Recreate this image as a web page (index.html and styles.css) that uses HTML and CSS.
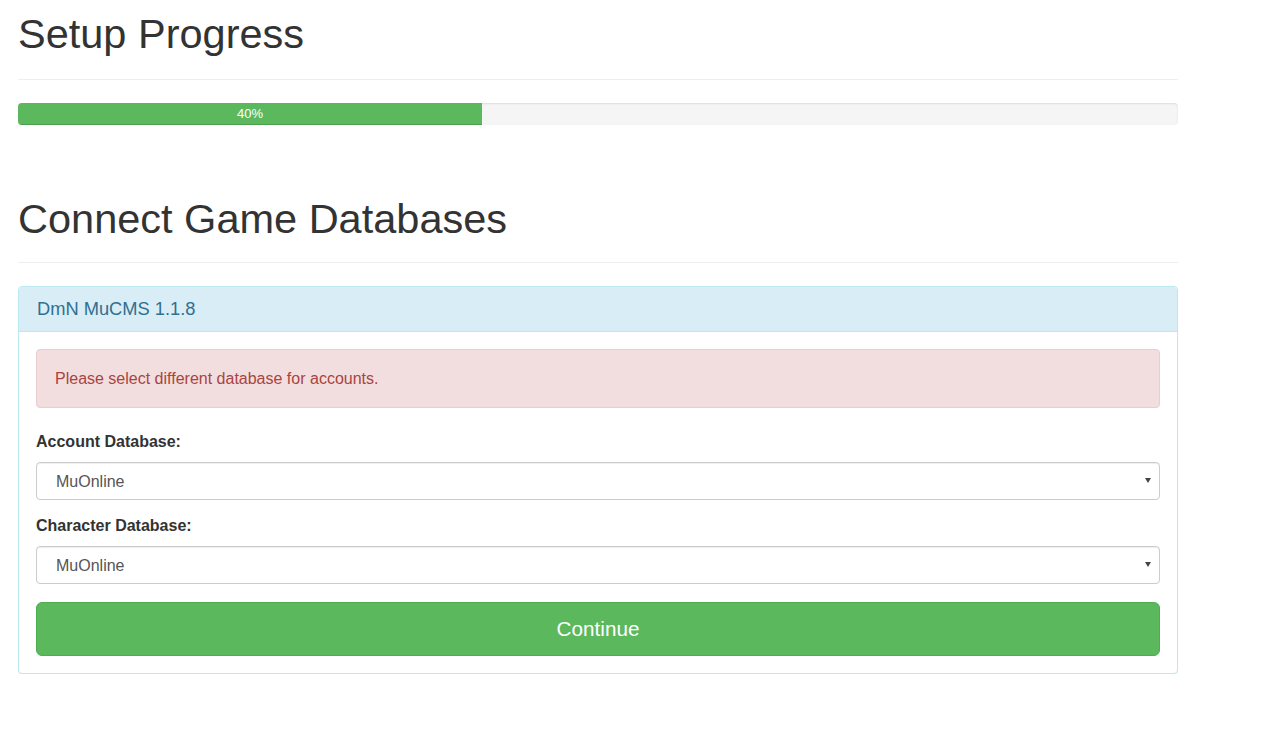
FILE: index.html
```html
<!DOCTYPE html>
<html lang="en">
<head>
<meta charset="utf-8">
<title>Setup Progress</title>
<link rel="stylesheet" href="styles.css">
</head>
<body>
<div class="container">
  <div class="page-header first">
    <h1>Setup Progress</h1>
  </div>
  <div class="progress">
    <div class="progress-bar" style="width: 40%">40%</div>
  </div>

  <div class="page-header second">
    <h1>Connect Game Databases</h1>
  </div>

  <div class="panel">
    <div class="panel-heading">DmN MuCMS 1.1.8</div>
    <div class="panel-body">
      <div class="alert">Please select different database for accounts.</div>
      <form class="form">
        <div class="form-group">
          <label class="label" for="acc">Account Database:</label>
          <div class="select-wrap">
            <select id="acc" class="form-control"><option>MuOnline</option></select>
            <span class="caret"></span>
          </div>
        </div>
        <div class="form-group">
          <label class="label" for="chr">Character Database:</label>
          <div class="select-wrap">
            <select id="chr" class="form-control"><option>MuOnline</option></select>
            <span class="caret"></span>
          </div>
        </div>
        <button type="button" class="btn">Continue</button>
      </form>
    </div>
  </div>
</div>
</body>
</html>
```
FILE: styles.css
```css
* { box-sizing: border-box; }

html, body {
  margin: 0;
  padding: 0;
  background: #fff;
}

body {
  font-family: "Liberation Sans", Arial, Helvetica, sans-serif;
  font-size: 16px;
  line-height: 1.4;
  color: #333;
}

.container {
  width: 1196px;
  padding: 0 18px;
}

.page-header {
  border-bottom: 1px solid #eee;
}

.page-header h1 {
  margin: 0;
  font-size: 41.5px;
  font-weight: 400;
  line-height: 45px;
  color: #333;
}

.page-header.first {
  padding-top: 11px;
  padding-bottom: 23px;
}

.page-header.second {
  margin-top: 71px;
  padding-bottom: 21px;
}

.progress {
  margin-top: 23px;
  height: 22px;
  background: #f5f5f5;
  border-radius: 4px;
  overflow: hidden;
  box-shadow: inset 0 1px 2px rgba(0, 0, 0, 0.1);
  display: flex;
}

.progress-bar {
  height: 22px;
  background: #5cb85c;
  color: #fff;
  font-size: 13px;
  line-height: 22px;
  text-align: center;
  box-shadow: inset 0 -1px 0 rgba(0, 0, 0, 0.15);
}

.panel {
  margin-top: 23px;
  border: 1px solid #bce8f1;
  border-radius: 4px;
  background: #fff;
  box-shadow: 0 1px 1px rgba(0, 0, 0, 0.05);
}

.panel-heading {
  background: #d9edf7;
  color: #31708f;
  border-bottom: 1px solid #bce8f1;
  border-radius: 3px 3px 0 0;
  padding: 10px 18px;
  font-size: 18.3px;
  line-height: 24px;
}

.panel-body {
  padding: 17px;
}

.alert {
  background: #f2dede;
  border: 1px solid #ebccd1;
  color: #a94442;
  border-radius: 4px;
  padding: 17px 18px;
  line-height: 23px;
  margin-bottom: 24px;
}

.form {
  margin: 0;
}

.form-group {
  margin-bottom: 16px;
}

.label {
  display: block;
  font-weight: 700;
  line-height: 20px;
  margin-bottom: 10px;
  color: #333;
}

.select-wrap {
  position: relative;
}

.form-control {
  display: block;
  width: 100%;
  height: 38px;
  padding: 0 30px 0 19px;
  font-family: inherit;
  font-size: 16px;
  color: #555;
  background: #fff;
  border: 1px solid #ccc;
  border-radius: 4px;
  box-shadow: inset 0 1px 1px rgba(0, 0, 0, 0.075);
  -webkit-appearance: none;
  appearance: none;
  outline: none;
}

.caret {
  position: absolute;
  right: 9px;
  top: 16px;
  width: 0;
  height: 0;
  border-left: 3px solid transparent;
  border-right: 3px solid transparent;
  border-top: 5px solid #444;
  pointer-events: none;
}

.btn {
  display: block;
  width: 100%;
  height: 54px;
  margin-top: 18px;
  background: #5cb85c;
  border: 1px solid #4cae4c;
  border-radius: 6px;
  color: #fff;
  font-family: inherit;
  font-size: 20.7px;
  line-height: 1.3;
  cursor: pointer;
}
```
